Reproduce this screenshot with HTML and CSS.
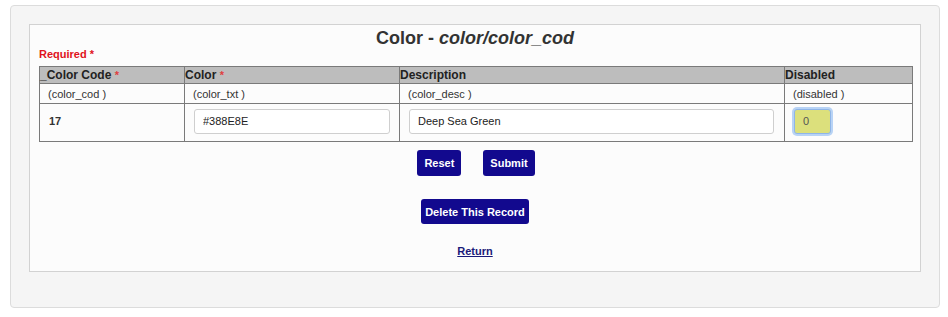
FILE: index.html
```html
<!DOCTYPE html>
<html lang="en">

<head>
    <meta charset="UTF-8">
    <title>Color - color/color_cod</title>
    <link rel="stylesheet" href="styles.css">
</head>

<body>

    <div class="outer">
        <div class="panel">
            <h1>Color - <em>color/color_cod</em></h1>
            <div class="required">Required <span class="star">*</span></div>

            <table class="grid">
                <colgroup>
                    <col class="c1">
                    <col class="c2">
                    <col class="c3">
                    <col class="c4">
                </colgroup>
                <tr class="head">
                    <th>_Color Code <span class="star">*</span></th>
                    <th>Color <span class="star">*</span></th>
                    <th>Description</th>
                    <th>Disabled</th>
                </tr>
                <tr class="names">
                    <td>(color_cod )</td>
                    <td>(color_txt )</td>
                    <td>(color_desc )</td>
                    <td>(disabled )</td>
                </tr>
                <tr class="values">
                    <td>17</td>
                    <td><input type="text" class="txt w-color" value="#388E8E"></td>
                    <td><input type="text" class="txt w-desc" value="Deep Sea Green"></td>
                    <td><input type="text" class="txt w-dis" value="0"></td>
                </tr>
            </table>

            <div class="actions">
                <button class="btn">Reset</button>
                <button class="btn">Submit</button>
            </div>
            <div class="actions delete">
                <button class="btn">Delete This Record</button>
            </div>
            <div class="back"><a href="#">Return</a></div>
        </div>
    </div>

</body>

</html>
```

FILE: styles.css
```css
body {
    font-family: Arial, "Liberation Sans", sans-serif;
    background-color: #ffffff;
    color: #333;
    margin: 0;
    padding: 5px 8px 0 10px;
}

.outer {
    width: 892px;
    height: 248px;
    padding: 18px 18px 35px 18px;
    background-color: #f5f5f5;
    border: 1px solid #dcdcdc;
    border-radius: 4px;
}

.panel {
    height: 246px;
    padding: 0 9px;
    background-color: #fcfcfc;
    border: 1px solid #d2d2d2;
}

h1 {
    margin: 0;
    padding-top: 3px;
    height: 20px;
    font-size: 18px;
    line-height: 20px;
    text-align: center;
    color: #333;
}

.required {
    margin: 0 0 6px 0;
    height: 12px;
    font-size: 11px;
    line-height: 12px;
    font-weight: bold;
    color: #e0121b;
}

.star {
    color: #e0121b;
    font-weight: bold;
}

.grid {
    width: 873px;
    border-collapse: collapse;
    table-layout: fixed;
    font-size: 11px;
}

.c1 { width: 145px; }
.c2 { width: 215px; }
.c3 { width: 385px; }
.c4 { width: 128px; }

.grid th,
.grid td {
    border: 1px solid #7a7a7a;
    text-align: left;
    padding: 0;
}

.head th {
    background-color: #bdbdbd;
    height: 16px;
    font-size: 12px;
    line-height: 14px;
    color: #222;
}

.head .star {
    color: #e04040;
    font-size: 11px;
}

.names td {
    height: 19px;
    padding-left: 8px;
    color: #333;
}

.values td {
    height: 34px;
    padding: 0 0 3px 9px;
    color: #333;
    font-weight: bold;
}

.txt {
    box-sizing: border-box;
    height: 25px;
    margin: 0;
    padding: 0 8px;
    font-family: Arial, "Liberation Sans", sans-serif;
    font-size: 11px;
    color: #222;
    background-color: #ffffff;
    border: 1px solid #cfcfcf;
    border-radius: 3px;
    display: block;
}

.w-color { width: 196px; }
.w-desc { width: 365px; }

.w-dis {
    width: 37px;
    color: #555;
    background-color: #dce07c;
    border: 1px solid #8fb5e8;
    box-shadow: 0 0 0 2px #b8d3f5;
}

.actions {
    display: flex;
    justify-content: center;
    gap: 22px;
    margin-top: 8px;
    padding-left: 2px;
}

.actions.delete {
    margin-top: 23px;
    padding-left: 0;
}

.btn {
    height: 26px;
    padding: 0 7px;
    font-family: Arial, "Liberation Sans", sans-serif;
    font-size: 11px;
    font-weight: bold;
    color: #ffffff;
    background-color: #12098e;
    border: none;
    border-radius: 3px;
    cursor: pointer;
}

.delete .btn {
    height: 25px;
    padding: 0 4px;
}

.back {
    margin-top: 21px;
    text-align: center;
    font-size: 11px;
    font-weight: bold;
}

.back a {
    color: #1a1a7a;
}
```
